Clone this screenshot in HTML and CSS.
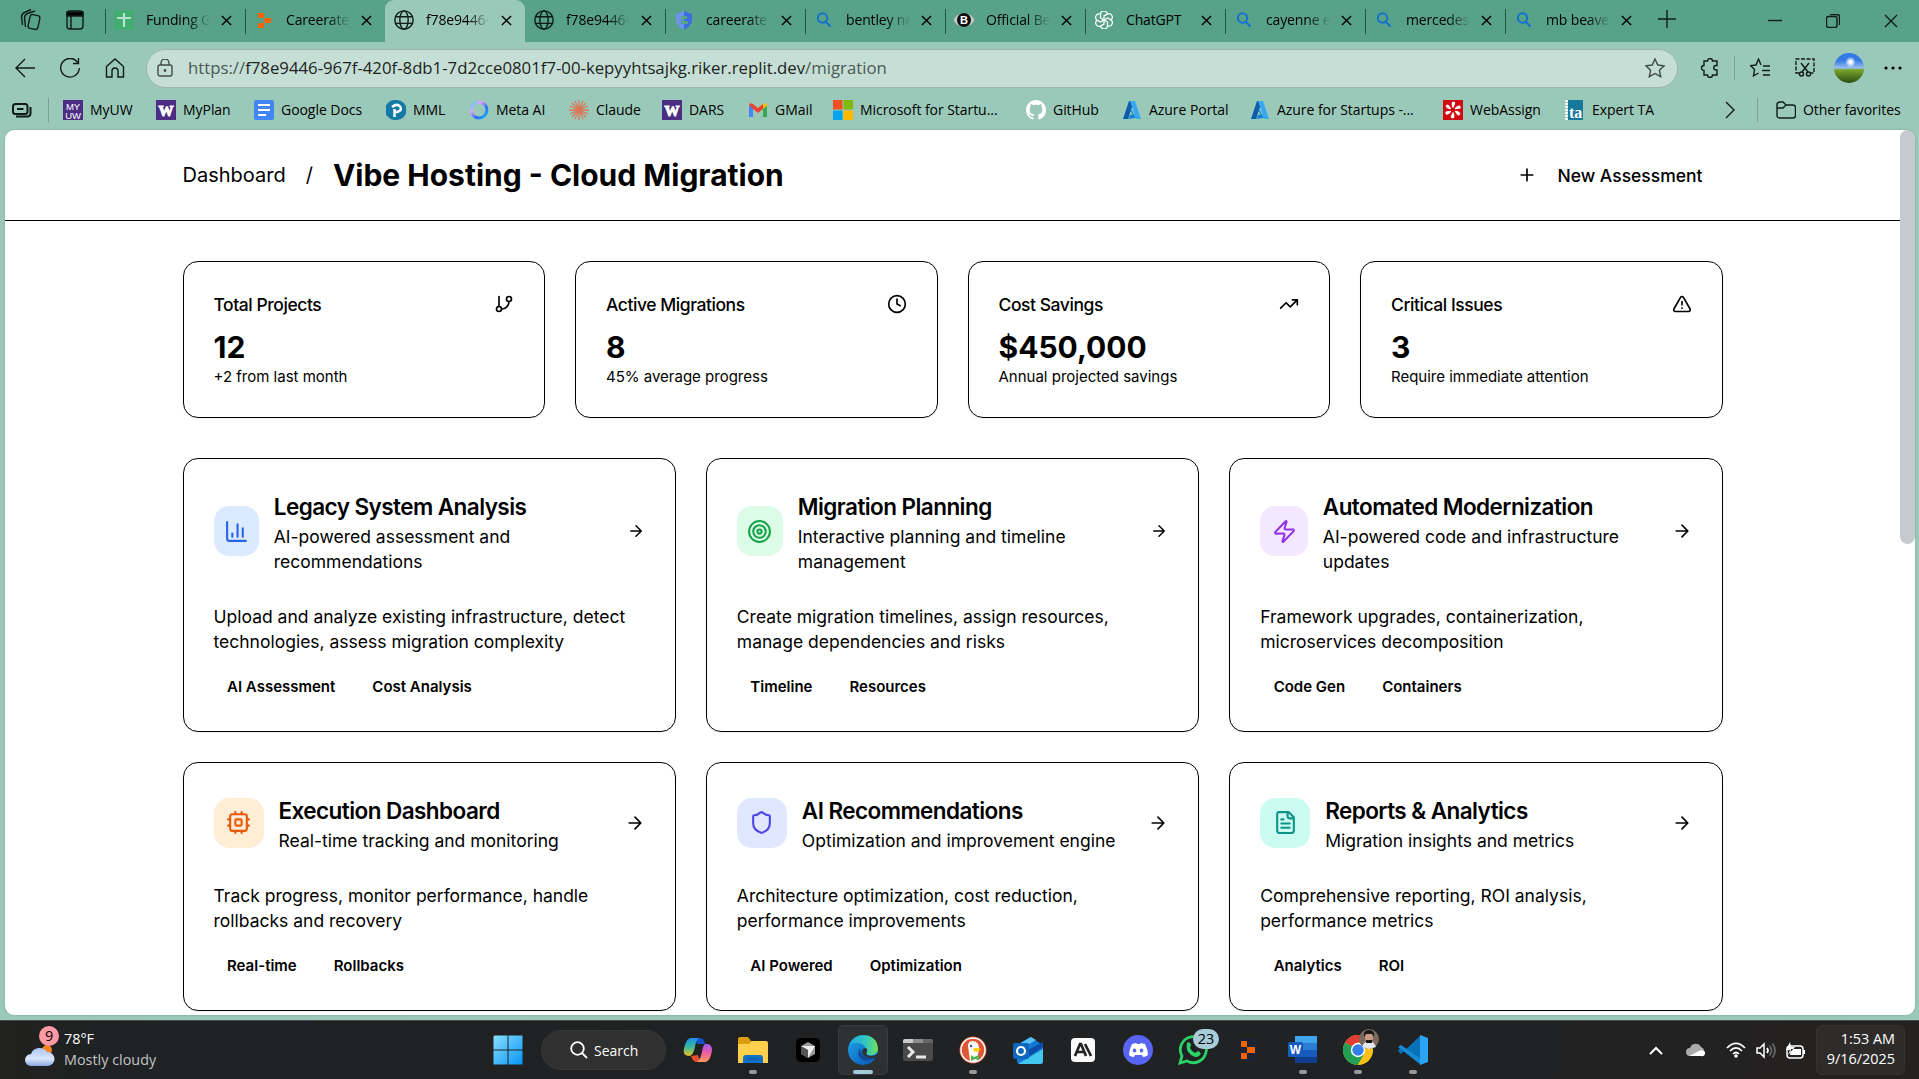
FILE: index.html
```html
<!DOCTYPE html>
<html lang="en">
<head>
<meta charset="utf-8">
<title>Vibe Hosting - Cloud Migration</title>
<link rel="stylesheet" href="styles.css">
</head>
<body>
<svg class="defs" aria-hidden="true">
  <symbol id="close" viewBox="0 0 12 12"><path d="M1 1l10 10M11 1L1 11"/></symbol>
  <symbol id="globe" viewBox="0 0 24 24"><circle cx="12" cy="12" r="11"/><ellipse cx="12" cy="12" rx="5" ry="11"/><path d="M2 8h20M2 16h20"/></symbol>
  <symbol id="find" viewBox="0 0 20 20"><circle cx="8.500" cy="8" r="4.700"/><path d="M12 12l4.500 4.500"/></symbol>
  <symbol id="arrow" viewBox="0 0 24 24"><path d="M5 12h14M12 5l7 7-7 7"/></symbol>
  <symbol id="azure" viewBox="0 0 20 20"><path fill="#0b5cab" d="M7 1h5L6 19H1z"/><path fill="#1686d9" d="M9 9l5 9-8 1 2-4 3-1-3-3z"/><path fill="#38a9ee" d="M8 1h5l6 18h-5z"/></symbol>
</svg>

<header class="browser">
  <div class="tabstrip">
    <div class="tabtools">
      <svg class="ln" width="22" height="24" viewBox="0 0 22 24"><rect x="9" y="7" width="10" height="14" rx="2.500" transform="rotate(12 14 14)"/><path d="M5.500 19l-1-9q0-3 3-4.500L15 3M2.500 17l-1-8q0-3 3-4.500L11 1.500"/></svg>
      <svg class="ln" width="18" height="22" viewBox="0 0 18 22"><rect x="1" y="2" width="16" height="18" rx="3"/><path fill="#000" d="M1 3h16v4H1z"/><path d="M5 7v13"/></svg>
    </div>
    <div class="tab"><svg class="fav" viewBox="0 0 20 20"><rect width="20" height="20" rx="2" fill="#42ad73"/><path d="M10 3v14M3 8h14" stroke="#b9e4ca" stroke-width="2.200"/></svg><span>Funding G</span><svg class="x"><use href="#close"/></svg></div>
    <div class="tab"><svg class="fav" viewBox="0 0 20 20" fill="#ff6205"><rect x="4" y="3" width="6" height="5" rx="1"/><rect x="10" y="8" width="7" height="5" rx="1"/><rect x="4" y="13" width="6" height="5" rx="1"/></svg><span>Careerate</span><svg class="x"><use href="#close"/></svg></div>
    <div class="tab active"><svg class="fav ln"><use href="#globe"/></svg><span>f78e9446-</span><svg class="x"><use href="#close"/></svg></div>
    <div class="tab after"><svg class="fav ln"><use href="#globe"/></svg><span>f78e9446-</span><svg class="x"><use href="#close"/></svg></div>
    <div class="tab"><svg class="fav" viewBox="0 0 20 20"><path fill="#3d6ee0" d="M10 1l8 3v5c0 5-3 8-8 11z"/><path fill="#6d93ea" d="M10 1L2 4v5c0 5 3 8 8 11z"/><path fill="#57a288" d="M7 6h6v3H9v2h5v3H7z"/></svg><span>careerate</span><svg class="x"><use href="#close"/></svg></div>
    <div class="tab"><svg class="fav blue"><use href="#find"/></svg><span>bentley ne</span><svg class="x"><use href="#close"/></svg></div>
    <div class="tab"><svg class="fav" viewBox="0 0 20 20"><ellipse cx="10" cy="10" rx="10" ry="6.500" fill="#c4c9c8"/><circle cx="10" cy="10" r="7" fill="#111"/><text x="10" y="14" class="bfav">B</text></svg><span>Official Be</span><svg class="x"><use href="#close"/></svg></div>
    <div class="tab"><svg class="fav knot" viewBox="0 0 20 20"><path id="k" d="M10 10V5.500l4-2.300a3.800 3.800 0 0 1 4 6.300"/><use href="#k" transform="rotate(60 10 10)"/><use href="#k" transform="rotate(120 10 10)"/><use href="#k" transform="rotate(180 10 10)"/><use href="#k" transform="rotate(240 10 10)"/><use href="#k" transform="rotate(300 10 10)"/></svg><span>ChatGPT</span><svg class="x"><use href="#close"/></svg></div>
    <div class="tab"><svg class="fav blue"><use href="#find"/></svg><span>cayenne e</span><svg class="x"><use href="#close"/></svg></div>
    <div class="tab"><svg class="fav blue"><use href="#find"/></svg><span>mercedes</span><svg class="x"><use href="#close"/></svg></div>
    <div class="tab"><svg class="fav blue"><use href="#find"/></svg><span>mb beave</span><svg class="x"><use href="#close"/></svg></div>
    <div class="newtab"><svg class="ln" width="18" height="18" viewBox="0 0 18 18"><path d="M9 0v18M0 9h18"/></svg></div>
    <div class="wincontrols">
      <svg class="ln" width="14" height="14"><path d="M0 6.500h14"/></svg>
      <svg class="ln" width="14" height="14"><rect x=".5" y="2.500" width="10.500" height="11" rx="2"/><path d="M4 .5h7q2.500 0 2.500 2.500v8"/></svg>
      <svg class="ln" width="14" height="14"><path d="M1 1l12 12M13 1L1 13"/></svg>
    </div>
  </div>

  <div class="toolbar">
    <svg class="ln" width="20" height="20" viewBox="0 0 20 20"><path d="M20 10H1M10 1l-9 9 9 9"/></svg>
    <svg class="ln" width="20" height="20" viewBox="0 0 20 20"><path d="M18 5A9.300 9.300 0 1 0 19.300 10M18.500 0v5.500H13"/></svg>
    <svg class="ln" width="20" height="20" viewBox="0 0 20 20"><path d="M1.500 8.500L10 1l8.500 7.500V19h-5.500v-6a3 3 0 0 0-6 0v6H1.500z"/></svg>
    <div class="address">
      <svg class="ln dim" width="16" height="18" viewBox="0 0 16 18"><rect x="1" y="6" width="14" height="11" rx="2"/><path d="M4 6V4a4 4 0 0 1 8 0v2"/><circle cx="8" cy="11.500" r=".7" fill="#333"/></svg>
      <span class="url"><i>https://</i>f78e9446-967f-420f-8db1-7d2cce0801f7-00-kepyyhtsajkg.riker.replit.dev<i>/migration</i></span>
      <svg class="ln dim star" width="20" height="20" viewBox="0 0 20 20"><path d="M10 1l2.800 6 6.300.8-4.700 4.400 1.300 6.500L10 15.500l-5.700 3.200 1.300-6.500L.9 7.800 7.200 7z"/></svg>
    </div>
    <div class="actions">
      <svg class="ln" width="20" height="20" viewBox="0 0 20 20"><path d="M4 3h3.500a2.500 2.500 0 0 1 5 0H17v4.500h-1a2 2 0 0 0 0 4.500h1v5h-4.500a2.500 2.500 0 0 1-5 0H4v-4.500a2.500 2.500 0 0 1 0-5z"/></svg>
      <b class="rule"></b>
      <svg class="ln" width="20" height="20" viewBox="0 0 20 20"><path d="M11 7L8.500 1 6 7l-5.500.6 4 4L3.500 18l5-3M13 8h7M12 12.500h8M13 17h7"/></svg>
      <svg class="ln" width="20" height="20" viewBox="0 0 20 20"><path stroke-dasharray="4 1.500" d="M4 15H1V1h18v14h-3"/><path d="M6 5l7 9M14 5l-7 9"/><circle cx="6.500" cy="16" r="2"/><circle cx="13.500" cy="16" r="2"/></svg>
      <i class="avatar"></i>
      <svg width="18" height="4" fill="#000"><circle cx="2" cy="2" r="1.600"/><circle cx="9" cy="2" r="1.600"/><circle cx="16" cy="2" r="1.600"/></svg>
    </div>
  </div>

  <nav class="bookmarks">
    <div><svg class="ln bold" viewBox="0 0 20 20"><rect x="1" y="4" width="14.500" height="10" rx="2.500"/><path d="M5 9h6.500M4 16.500h11q3.500 0 3.500-3V7"/></svg></div>
    <b class="rule"></b>
    <div><svg viewBox="0 0 20 20"><rect width="20" height="20" fill="#4b2e83"/><text x="10" y="9.500" class="myuw">MY</text><text x="10" y="18.500" class="myuw">UW</text></svg>MyUW</div>
    <div><svg viewBox="0 0 20 20"><rect width="20" height="20" fill="#4b2e83"/><text x="10" y="15.500" class="uw">W</text></svg>MyPlan</div>
    <div><svg viewBox="0 0 20 20"><rect width="20" height="20" rx="2" fill="#4285f4"/><path d="M4 5h12M4 10h12M4 15h8" stroke="#fff" stroke-width="2"/></svg>Google Docs</div>
    <div><svg viewBox="0 0 20 20"><path fill="#127aa4" d="M10 0a10 10 0 0 1 1 20H8A10 10 0 0 1 10 0"/><path d="M8.500 17V9M6 7q5-4 8-.5T11 12H8.500" fill="none" stroke="#fff" stroke-width="2.500"/></svg>MML</div>
    <div><svg viewBox="0 0 20 20"><defs><linearGradient id="meta" x2="1" y2="1"><stop stop-color="#28d8eb"/><stop offset=".3" stop-color="#e8a2fa"/><stop offset=".65" stop-color="#286cf6"/><stop offset="1" stop-color="#18c4ec"/></linearGradient></defs><circle cx="10" cy="10" r="8" fill="none" stroke="url(#meta)" stroke-width="3"/></svg>Meta AI</div>
    <div><svg viewBox="0 0 20 20"><path d="M10 0v20M0 10h20M3 3l14 14M17 3L3 17M6 1l8 18M14 1L6 19M1 6l18 8M19 6L1 14" stroke="#d97757" stroke-width="1.300"/></svg>Claude</div>
    <div><svg viewBox="0 0 20 20"><rect width="20" height="20" fill="#4b2e83"/><text x="10" y="15.500" class="uw">W</text></svg>DARS</div>
    <div><svg viewBox="0 0 20 20"><path fill="#4285f4" d="M1 5l4 3v9H1z"/><path fill="#34a853" d="M15 8l4-3v12h-4z"/><path fill="#ea4335" d="M1 5q1-3 4-1l5 4 5-4v5l-5 4-5-4z"/><path fill="#fbbc04" d="M15 4q3-2 4 1v1l-4 3z"/></svg>GMail</div>
    <div><svg viewBox="0 0 20 20"><path fill="#f25022" d="M0 0h9.500v9.500H0z"/><path fill="#7fba00" d="M10.500 0H20v9.500h-9.500z"/><path fill="#00a4ef" d="M0 10.500h9.500V20H0z"/><path fill="#ffb900" d="M10.500 10.500H20V20h-9.500z"/></svg>Microsoft for Startu...</div>
    <div><svg viewBox="0 0 16 16"><path fill="#fff" d="M8 0C3.580 0 0 3.580 0 8c0 3.540 2.290 6.530 5.470 7.590.4.070.55-.17.55-.38 0-.19-.01-.82-.01-1.490-2.010.37-2.530-.49-2.690-.94-.09-.23-.48-.94-.82-1.130-.28-.15-.68-.52-.01-.53.63-.01 1.080.58 1.230.82.72 1.210 1.870.87 2.330.66.070-.52.28-.87.510-1.070-1.780-.2-3.640-.89-3.640-3.950 0-.87.310-1.590.82-2.150-.08-.2-.36-1.020.08-2.120 0 0 .67-.21 2.200.82.640-.18 1.320-.27 2-.27s1.360.09 2 .27c1.530-1.040 2.200-.82 2.200-.82.44 1.100.16 1.920.08 2.120.51.560.82 1.270.82 2.150 0 3.070-1.870 3.750-3.650 3.950.29.25.54.73.54 1.480 0 1.070-.01 1.930-.01 2.200 0 .21.15.46.55.38A8 8 0 0 0 16 8c0-4.420-3.580-8-8-8"/></svg>GitHub</div>
    <div><svg><use href="#azure"/></svg>Azure Portal</div>
    <div><svg><use href="#azure"/></svg>Azure for Startups -...</div>
    <div><svg viewBox="0 0 20 20"><rect width="20" height="20" fill="#d10a11"/><g fill="#fff"><path id="pt" d="M9 2q4-1 3 2t-2 4q-2-2-1-6"/><use href="#pt" transform="rotate(60 10 10)"/><use href="#pt" transform="rotate(120 10 10)"/><use href="#pt" transform="rotate(180 10 10)"/><use href="#pt" transform="rotate(240 10 10)"/><use href="#pt" transform="rotate(300 10 10)"/></g></svg>WebAssign</div>
    <div><svg viewBox="0 0 20 20"><path fill="#16789b" d="M3 0h15v20H3z"/><path d="M1.500 0v20" stroke="#fff" stroke-width="2.500" stroke-dasharray="2 1"/><text x="10.500" y="17.500" class="ta">ta</text></svg>Expert TA</div>
    <div><svg class="ln" viewBox="0 0 20 20"><path d="M6 2l8 8-8 8"/></svg></div>
    <b class="rule"></b>
    <div><svg class="ln" viewBox="0 0 20 20"><path d="M1 5q0-3 3-3h3l3 3-3 3H1zM10 5h7q2.500 0 2.500 2.500v8q0 2.500-2.500 2.500H3.500Q1 18 1 15.500V7"/></svg>Other favorites</div>
  </nav>
</header>

<div class="viewport">
  <div class="page">
    <header class="pagehead">
      <div class="crumbs"><span>Dashboard</span><span>/</span><h1>Vibe Hosting - Cloud Migration</h1></div>
      <button class="new"><svg class="ic" viewBox="0 0 24 24"><path d="M5 12h14M12 5v14"/></svg>New Assessment</button>
    </header>
    <main>
      <section class="stats">
        <article class="card"><header><h3>Total Projects</h3><svg class="ic" viewBox="0 0 24 24"><path d="M6 3v12M18 9a9 9 0 0 1-9 9"/><circle cx="18" cy="6" r="3"/><circle cx="6" cy="18" r="3"/></svg></header><strong>12</strong><p>+2 from last month</p></article>
        <article class="card"><header><h3>Active Migrations</h3><svg class="ic" viewBox="0 0 24 24"><circle cx="12" cy="12" r="10"/><path d="M12 6v6l4 2"/></svg></header><strong>8</strong><p>45% average progress</p></article>
        <article class="card"><header><h3>Cost Savings</h3><svg class="ic" viewBox="0 0 24 24"><path d="M22 7l-8.500 8.500-5-5L2 17M16 7h6v6"/></svg></header><strong>$450,000</strong><p>Annual projected savings</p></article>
        <article class="card"><header><h3>Critical Issues</h3><svg class="ic" viewBox="0 0 24 24"><path d="m21.730 18-8-14a2 2 0 0 0-3.480 0l-8 14A2 2 0 0 0 4 21h16a2 2 0 0 0 1.730-3M12 9v4M12 17h.01"/></svg></header><strong>3</strong><p>Require immediate attention</p></article>
      </section>
      <section class="features">
        <article class="card">
          <header><i class="tile t1"><svg viewBox="0 0 24 24"><path d="M3 3v16a2 2 0 0 0 2 2h16M18 17V9M13 17V5M8 17v-3"/></svg></i><div><h2>Legacy System Analysis</h2><p>AI-powered assessment and<br>recommendations</p></div><svg class="ic go sm"><use href="#arrow"/></svg></header>
          <p>Upload and analyze existing infrastructure, detect<br>technologies, assess migration complexity</p>
          <footer><span>AI Assessment</span><span>Cost Analysis</span></footer>
        </article>
        <article class="card">
          <header><i class="tile t2"><svg viewBox="0 0 24 24"><circle cx="12" cy="12" r="10"/><circle cx="12" cy="12" r="6"/><circle cx="12" cy="12" r="2"/></svg></i><div><h2>Migration Planning</h2><p>Interactive planning and timeline<br>management</p></div><svg class="ic go sm"><use href="#arrow"/></svg></header>
          <p>Create migration timelines, assign resources,<br>manage dependencies and risks</p>
          <footer><span>Timeline</span><span>Resources</span></footer>
        </article>
        <article class="card">
          <header><i class="tile t3"><svg viewBox="0 0 24 24"><path d="M4 14a1 1 0 0 1-.78-1.630l9.900-10.200a.5.5 0 0 1 .86.46l-1.920 6.020A1 1 0 0 0 13 10h7a1 1 0 0 1 .78 1.630l-9.900 10.200a.5.5 0 0 1-.86-.46l1.920-6.020A1 1 0 0 0 11 14z"/></svg></i><div><h2>Automated Modernization</h2><p>AI-powered code and infrastructure<br>updates</p></div><svg class="ic go"><use href="#arrow"/></svg></header>
          <p>Framework upgrades, containerization,<br>microservices decomposition</p>
          <footer><span>Code Gen</span><span>Containers</span></footer>
        </article>
        <article class="card">
          <header><i class="tile t4"><svg viewBox="0 0 24 24"><rect x="4" y="4" width="16" height="16" rx="2"/><rect x="9" y="9" width="6" height="6" rx="1"/><path d="M15 2v2M15 20v2M2 15h2M2 9h2M20 15h2M20 9h2M9 2v2M9 20v2"/></svg></i><div><h2>Execution Dashboard</h2><p>Real-time tracking and monitoring</p></div><svg class="ic go"><use href="#arrow"/></svg></header>
          <p>Track progress, monitor performance, handle<br>rollbacks and recovery</p>
          <footer><span>Real-time</span><span>Rollbacks</span></footer>
        </article>
        <article class="card">
          <header><i class="tile t5"><svg viewBox="0 0 24 24"><path d="M20 13c0 5-3.500 7.500-7.660 8.950a1 1 0 0 1-.67-.01C7.500 20.500 4 18 4 13V6a1 1 0 0 1 1-1c2 0 4.500-1.200 6.240-2.720a1.170 1.170 0 0 1 1.520 0C14.510 3.810 17 5 19 5a1 1 0 0 1 1 1z"/></svg></i><div><h2>AI Recommendations</h2><p>Optimization and improvement engine</p></div><svg class="ic go"><use href="#arrow"/></svg></header>
          <p>Architecture optimization, cost reduction,<br>performance improvements</p>
          <footer><span>AI Powered</span><span>Optimization</span></footer>
        </article>
        <article class="card">
          <header><i class="tile t6"><svg viewBox="0 0 24 24"><path d="M15 2H6a2 2 0 0 0-2 2v16a2 2 0 0 0 2 2h12a2 2 0 0 0 2-2V7zM14 2v4a2 2 0 0 0 2 2h4M10 9H8M16 13H8M16 17H8"/></svg></i><div><h2>Reports &amp; Analytics</h2><p>Migration insights and metrics</p></div><svg class="ic go"><use href="#arrow"/></svg></header>
          <p>Comprehensive reporting, ROI analysis,<br>performance metrics</p>
          <footer><span>Analytics</span><span>ROI</span></footer>
        </article>
      </section>
    </main>
  </div>
  <div class="scrollbar"><i></i></div>
</div>

<footer class="taskbar">
  <div class="weather">
    <div class="cloud"><svg width="32" height="26" viewBox="0 0 32 26"><defs><linearGradient id="cl" x2="0" y2="1"><stop stop-color="#a9c6f6"/><stop offset=".6" stop-color="#dbe6fb"/><stop offset="1" stop-color="#87a7e2"/></linearGradient></defs><circle cx="22" cy="7" r="5" fill="#f58220"/><path fill="url(#cl)" d="M6 23a6 6 0 0 1 0-12 9 9 0 0 1 16-2 7 7 0 0 1 1 14z"/></svg><b>9</b></div>
    <div><div>78°F</div><div class="muted">Mostly cloudy</div></div>
  </div>
  <div class="apps">
    <div class="app"><svg viewBox="0 0 30 30"><defs><linearGradient id="w" x2="1" y2="1"><stop stop-color="#8ae0ff"/><stop offset="1" stop-color="#0694f8"/></linearGradient></defs><path fill="url(#w)" d="M1.500.5H14.500v14H.5V1.500zM15.500.5H29.500v14h-14zM.5 15.500h14v14H.5zM15.500 15.500h14v14h-14z"/></svg></div>
    <div class="search"><svg width="18" height="18" viewBox="0 0 18 18"><circle cx="7.500" cy="7.500" r="6.300"/><path d="M12 12l5 5"/></svg>Search</div>
    <div class="app"><svg viewBox="0 0 30 30"><defs><linearGradient id="ca" x2="0" y2="1"><stop stop-color="#1d8ded"/><stop offset=".5" stop-color="#3bb99d"/><stop offset="1" stop-color="#e6c51f"/></linearGradient><linearGradient id="cb" x2="0" y2="1"><stop stop-color="#a05cf0"/><stop offset=".5" stop-color="#ee5aa5"/><stop offset="1" stop-color="#fd9b55"/></linearGradient></defs><path fill="#1650c8" d="M8 3h9q4 0 5 6h-7z"/><path fill="#e9502b" d="M8 21l7-1 2 7h-3q-4 0-6-6"/><path fill="url(#ca)" d="M8 3h8q-3 2-4 9-2 9-6 9-8 0-4-11 2-7 6-7"/><path fill="url(#cb)" d="M22 9h3q6 2 3 11-2 7-6 7h-8q3-2 5-10 1-7 3-8"/></svg></div>
    <div class="app run"><svg viewBox="0 0 30 30"><path fill="#dc9c10" d="M0 4q0-2 2-2h8l3 4h15v8H0z"/><path fill="#ffd04b" d="M0 9h11l3-3h14q2 0 2 2v20H0z"/><path fill="#0f72c6" d="M5 28v-5q0-3 3-3h14q3 0 3 3v5z"/><path d="M9 24h12" stroke="#0a4c91"/></svg></div>
    <div class="app"><svg viewBox="0 0 30 30"><rect x="3" y="3" width="24" height="24" rx="5" fill="#000"/><path fill="#999" d="M15 7l7 4v8l-7 4-7-4v-8z"/><path fill="#eee" d="M8 11h14l-7 12v-8z"/><path fill="#555" d="M8 11l7 4v8l-7-4z"/></svg></div>
    <div class="app current"><svg viewBox="0 0 30 30"><defs><linearGradient id="e1" x2="1"><stop stop-color="#22a8e5"/><stop offset=".6" stop-color="#34c8bd"/><stop offset="1" stop-color="#70e052"/></linearGradient><linearGradient id="e2" x2="1" y2="1"><stop stop-color="#1fa5e8"/><stop offset="1" stop-color="#0654b5"/></linearGradient></defs><circle cx="15" cy="15" r="15" fill="url(#e2)"/><path fill="url(#e1)" d="M1 10C7-4 30-3 30 14c0 6-8 8-12 5-2-2 1-2 0-5-2-7-12-8-17-4"/><path fill="#124c98" d="M12 13c-5 8 2 15 10 12 3-1 6-3 5-4-7 3-15 0-15-8"/><path fill="#2e3031" d="M18 13c3 3-1 5 1 7 3 2 8 1 11-1l-2 4c-5 1-13-1-14-6q0-4 4-4"/></svg></div>
    <div class="app"><svg viewBox="0 0 30 30"><rect y="4" width="30" height="22" rx="2" fill="#4a4a4a"/><path fill="#ccc" d="M0 8V6q0-2 2-2h8v4z"/><path fill="#8c8c8c" d="M10 4h10v4H10z"/><path fill="#666" d="M20 4h8q2 0 2 2v2H20z"/><path d="M5 12l5 5-5 5M13 22h10" fill="none" stroke="#e8e8e8" stroke-width="3"/></svg></div>
    <div class="app run"><svg viewBox="0 0 30 30"><circle cx="15" cy="15" r="13.500" fill="#de5833"/><circle cx="15" cy="15" r="12" fill="none" stroke="#fff" stroke-width="1.500"/><path fill="#fff" d="M12 26L10 11q0-5 5-5 6 1 6 7l-2 13q-4 2-7 0"/><path fill="#fdd20a" d="M15 14q3-2 8 0l-4 3q-4 0-4-3"/><circle cx="13" cy="11" r="1.200" fill="#2d4f8e"/><path fill="#50b850" d="M13 20l3 2 5-2v5l-4-1-4 2z"/></svg></div>
    <div class="app"><svg viewBox="0 0 30 30"><path fill="#1478d4" d="M4 10L17 2l13 8v17q0 2-2 2H7q-3 0-3-3z"/><path fill="#5bc0f5" d="M6 9l12-7 5 3-15 9z"/><path fill="#0c4da8" d="M9 18l21-11v5L12 24z"/><path fill="#42c8ee" d="M5 29l25-15v12q0 3-3 3z"/><rect y="8" width="16" height="16" rx="2" fill="#0f66bd"/><circle cx="8" cy="16" r="4" fill="none" stroke="#fff" stroke-width="2.200"/></svg></div>
    <div class="app"><svg viewBox="0 0 30 30"><rect x="3" y="3" width="24" height="24" rx="4" fill="#fafafa"/><path d="M7 21l5-12h1l5 12M9 17h7M17 9l6 12" fill="none" stroke="#222" stroke-width="2.700"/></svg></div>
    <div class="app"><svg viewBox="0 0 30 30"><circle cx="15" cy="15" r="15" fill="#5865f2"/><path fill="#fff" d="M9 9l4-1 1 1h3l1-1 4 1q3 6 3 11-2 2-5 2l-1-2h-7l-1 2q-3 0-5-2 0-5 3-11"/><ellipse cx="11.500" cy="15.500" rx="1.800" ry="2" fill="#5865f2"/><ellipse cx="18.500" cy="15.500" rx="1.800" ry="2" fill="#5865f2"/></svg></div>
    <div class="app"><svg viewBox="0 0 30 30"><path d="M2 28l2-7a13 13 0 1 1 5 5z" fill="none" stroke="#2bd366" stroke-width="2.800"/><path fill="#2bd366" d="M9 8q3-2 4 2l-1 3q2 4 5 5l3-2q4 2 2 4-3 4-9 0Q7 15 9 8"/></svg><b class="count">23</b></div>
    <div class="app"><svg viewBox="0 0 30 30"><rect x="5" y="4" width="20" height="22" rx="2" fill="#1c2333"/><path fill="#f26207" d="M8 6h6v6H8zM14 12h8v6h-8zM8 18h6v6H8z"/></svg></div>
    <div class="app run"><svg viewBox="0 0 30 30"><path fill="#41a5ee" d="M7 1h22v7H7z"/><path fill="#2b7cd3" d="M7 8h22v7H7z"/><path fill="#185abd" d="M7 15h22v7H7z"/><path fill="#103f91" d="M7 22h22v6H7z"/><rect y="7" width="15" height="15" rx="1.500" fill="#185abd"/><text x="7.500" y="18.500" class="word">W</text></svg></div>
    <div class="app run"><svg viewBox="0 0 30 30"><circle cx="15" cy="15" r="15" fill="#fbc116"/><path fill="#df3d31" d="M15 15L2 7.500A15 15 0 0 1 28 7.500H15z"/><path fill="#229f52" d="M15 15L2 7.500A15 15 0 0 0 15 30l6-11z"/><path fill="#fbc116" d="M15 30l7-12V8h6a15 15 0 0 1-13 22"/><circle cx="15" cy="15" r="7.200" fill="#fff"/><circle cx="15" cy="15" r="5.700" fill="#347eec"/></svg><svg class="face" viewBox="0 0 20 20"><circle cx="10" cy="10" r="10" fill="#796a60"/><path fill="#e2e5ed" d="M3 18q2-6 7-6t7 6l-7 2z"/><ellipse cx="10" cy="8.500" rx="4" ry="5.500" fill="#c79a82"/><path fill="#1d1714" d="M5 8q-1-7 5-7t5 7l-2-3H7zM7 11h6v3H7z"/></svg></div>
    <div class="app run"><svg viewBox="0 0 30 30"><path fill="#0872b9" d="M22 1L3 19l-3-3 2-3 20 16z"/><path fill="#168bd2" d="M0 12l3-2 19 13v6z"/><path fill="#2aa4f3" d="M22 0l8 3v24l-8 3z"/></svg></div>
  </div>
  <div class="tray">
    <svg width="14" height="9"><path d="M1 8l6-6 6 6" stroke-width="2"/></svg>
    <svg width="20" height="14"><path d="M4 13a4 4 0 0 1 0-8 6 6 0 0 1 11-1 5 5 0 0 1 1 9z" fill="#aaa" stroke="none"/><path d="M3 13L15 7q5 1 4 4t-4 2z" fill="#fff" stroke="none"/></svg>
    <svg width="20" height="16"><path d="M1 6q9-9 18 0M4 9q6-6 12 0M7 12q3-3 6 0" stroke-width="1.700"/><circle cx="10" cy="14" r="1.800" fill="#fff" stroke="none"/></svg>
    <svg width="20" height="17"><path d="M1 6h3l4-4v13l-4-4H1z" stroke-width="1.500"/><path d="M11 6q2 2.500 0 5"/><path d="M13.500 3.500q4 5 0 10M16.500 1.500q5 7 0 14" stroke="#666"/></svg>
    <svg width="20" height="17"><rect x="1" y="4" width="16" height="12" rx="3" stroke-width="1.500"/><path d="M5 7h10v6H4zM17 8h2v4h-2zM4 0L0 8h4l-2 5 7-8H5z" fill="#fff" stroke="none"/></svg>
    <div class="clock"><div>1:53 AM</div><div>9/16/2025</div></div>
  </div>
</footer>
</body>
</html>
```
FILE: styles.css
```css
* { box-sizing: border-box; }
body { margin: 0; width: 1919px; height: 1079px; overflow: hidden; display: flex; flex-direction: column; background: #9bc9b9; color: #000; font-family: "Open Sans", sans-serif; }
h1, h2, h3, p { margin: 0; }
i { font-style: normal; }
svg { display: block; flex: none; }
.defs { position: absolute; width: 0; height: 0; }
.ln { fill: none; stroke: #101c18; stroke-width: 1.4; }
.ln.bold { stroke-width: 2; }
.ln.dim { stroke: #3f4c47; }
.rule { width: 1px; height: 24px; background: #7aa193; }

/* Browser chrome */
.browser { height: 130px; flex: none; display: flex; flex-direction: column; }
.tabstrip { height: 42px; background: #57a288; display: flex; align-items: stretch; font-size: 14px; letter-spacing: -.15px; }
.tabtools { width: 105px; display: flex; gap: 24px; align-items: center; padding: 0 0 2px 20px; }
.tab { width: 140px; display: flex; align-items: center; padding: 0 12px 2px 9px; position: relative; }
.tab::before { content: ""; position: absolute; left: 0; top: 9px; width: 1px; height: 25px; background: #245747; }
.tab.active { background: #9bc9b9; border-radius: 9px 9px 0 0; }
.tab.active::before, .tab.after::before { display: none; }
.fav { width: 20px; height: 20px; margin-right: 12px; }
.fav.ln { stroke-width: 1.7; }
.knot { fill: none; stroke: #fff; stroke-width: 1.4; padding: 1px; }
.blue { fill: none; stroke: #1272cd; stroke-width: 2; }
.tab span { width: 66px; overflow: hidden; white-space: nowrap; margin-top: -2px; -webkit-mask-image: linear-gradient(90deg, #000 62%, transparent 98%); }
.tab:has(.knot) span { -webkit-mask-image: none; }
.tab .x { width: 11px; height: 11px; margin-left: auto; margin-right: 1px; fill: none; stroke: #000; stroke-width: 1.5; overflow: visible; }
.newtab { width: 42px; display: flex; align-items: center; padding: 0 0 4px 13px; }
.wincontrols { flex: 1; display: flex; justify-content: flex-end; gap: 44px; align-items: center; padding-right: 21px; }
.bfav { font: bold 11px "Liberation Sans", sans-serif; fill: #fff; text-anchor: middle; }
.toolbar { height: 52px; display: flex; align-items: center; padding: 0 15px; }
.toolbar > svg { margin-right: 25px; }
.address { width: 1532px; height: 39px; border: 1px solid #9fb5ac; border-radius: 20px; background: #c5dfd6; display: flex; align-items: center; padding: 0 12px 0 10px; margin-left: -4px; }
.url { margin: -2px 0 0 15px; font-size: 16.75px; color: #1d2320; white-space: nowrap; }
.url i { color: #4c5954; }
.star { margin-left: auto; }
.actions { flex: 1; display: flex; align-items: center; padding-left: 22px; }
.actions .rule { margin: 0 15px 0 14px; }
.actions .rule + svg { margin-right: 25px; }
.avatar { width: 30px; height: 30px; border-radius: 50%; margin: 0 20px 0 19px; background: radial-gradient(circle at 55% 30%, #fff 0 5%, transparent 20%), linear-gradient(#3579e4 0 25%, #9ac0f2 50%, #79a52b 56%, #294e12); }
.bookmarks { flex: 1; display: grid; grid-template-columns: 36px 15px 93px 98px 132px 83px 100px 93px 86px 85px 193px 96px 128px 193px 122px 155px 37px 19px 150px; align-items: center; padding: 0 0 5px 12px; font-size: 14px; letter-spacing: -.05px; white-space: nowrap; }
.bookmarks div { display: flex; align-items: center; gap: 7px; }
.bookmarks svg { width: 20px; height: 20px; }
.myuw { font: 9.5px "Liberation Sans", sans-serif; fill: #fff; text-anchor: middle; }
.uw { font: bold 15px "Liberation Serif", serif; fill: #fff; stroke: #fff; text-anchor: middle; }
.ta { font: bold 16px "Liberation Serif", serif; fill: #fff; text-anchor: middle; }

/* Web page */
.viewport { width: 1910px; height: 885px; flex: none; margin-left: 5px; background: #fff; border-radius: 9px; overflow: hidden; display: flex; box-shadow: 0 0 2px #6d9d8c; }
.page { width: 1895px; font-family: Inter, sans-serif; }
.scrollbar { width: 15px; }
.scrollbar i { display: block; height: 414px; background: #c6cace; border-radius: 8px; }
.pagehead { height: 91px; border-bottom: 1px solid #000; display: flex; justify-content: space-between; align-items: center; padding: 0 177.5px; }
.crumbs { display: flex; align-items: center; gap: 20px; font-size: 20px; }
h1 { font-size: 30px; line-height: 40px; font-weight: 700; }
.new { display: flex; align-items: center; gap: 20px; padding: 0 20px; border: 0; background: none; color: #000; font: 500 17.5px/25px Inter, sans-serif; }
.ic { width: 20px; height: 20px; fill: none; stroke: #000; stroke-width: 2; stroke-linecap: round; stroke-linejoin: round; }
main { padding: 39.8px 177.5px 0; }
.card { border: 1px solid #000; border-radius: 15px; padding: 30px; box-shadow: 0 1px 2px #0001; }
.stats { display: grid; grid-template-columns: repeat(4, 1fr); gap: 30px; }
.stats header { display: flex; align-items: center; justify-content: space-between; margin-bottom: 10px; }
h3 { font-size: 17.5px; line-height: 25px; font-weight: 500; letter-spacing: -.44px; }
.stats strong { display: block; font-size: 30px; line-height: 40px; font-weight: 700; }
.stats p { font-size: 15px; line-height: 20px; }
.features { display: grid; grid-template-columns: repeat(3, 1fr); gap: 30px; margin-top: 40px; }
.features header { display: flex; align-items: center; margin-bottom: 30px; }
.features p { font-size: 17.5px; line-height: 25px; white-space: nowrap; }
h2 { font-size: 22.5px; line-height: 35px; font-weight: 600; letter-spacing: -.56px; white-space: nowrap; }
.go { margin-left: auto; }
.go.sm { width: 18px; }
.tile { width: 50px; height: 50px; border-radius: 15px; display: flex; align-items: center; justify-content: center; margin-right: 15px; flex: none; }
.tile svg { width: 25px; height: 25px; fill: none; stroke: currentColor; stroke-width: 2; stroke-linecap: round; stroke-linejoin: round; }
.t1 { width: 45.3px; background: #dbeafe; color: #2563eb; }
.t2 { width: 46px; background: #dcfce7; color: #16a34a; }
.t3 { width: 47.7px; background: #f3e8ff; color: #9333ea; }
.t4 { background: #ffedd5; color: #ea580c; }
.t5 { background: #e0e7ff; color: #4f46e5; }
.t6 { background: #ccfbf1; color: #0d9488; }
.features footer { display: flex; gap: 10px; margin-top: 20px; }
.features footer span { padding: 2.5px 12.5px; border: 1px solid transparent; font-size: 15px; line-height: 20px; font-weight: 600; }

/* Windows taskbar */
.taskbar { margin-top: 5px; height: 59px; flex: none; background: linear-gradient(90deg, #21211e, #1d2328 11%, #202122 22%, #202224 75%, #24211f); border-top: 1px solid #444b49; color: #fff; display: flex; align-items: center; font-size: 14.4px; }
.weather { width: 483px; display: flex; gap: 7px; padding: 0 0 2px 25px; line-height: 21px; }
.muted { color: #c2c3c3; }
.cloud { position: relative; padding-top: 15px; }
.cloud b { position: absolute; left: 14px; top: -2px; width: 20px; height: 20px; border-radius: 50%; background: #ff99a4; color: #000; font-weight: 400; line-height: 20px; text-align: center; }
.apps { display: flex; gap: 5px; }
.app { position: relative; width: 50px; height: 50px; display: flex; align-items: center; justify-content: center; border-radius: 5px; }
.app > svg { width: 30px; height: 30px; }
.app.current { background: #2e3031; border: 1px solid #393b3b; }
.run::after, .current::after { content: ""; position: absolute; bottom: 1px; width: 8px; height: 4px; border-radius: 2px; background: #999; }
.current::after { width: 20px; bottom: 0; background: #a4cbdc; }
.search { width: 125px; height: 40px; margin: 5px 2px 5px 3px; border-radius: 20px; background: #303030; border: 1px solid #363737; display: flex; align-items: center; gap: 6px; padding-left: 28px; font-size: 14px; }
.search svg, .tray svg { fill: none; stroke: #fff; stroke-width: 1.8; }
.count { position: absolute; left: 25px; top: 4px; width: 26px; height: 20px; border-radius: 11px; background: #a7cbd9; color: #000; font-weight: 400; line-height: 19px; text-align: center; }
.app > .face { position: absolute; left: 26px; top: 4px; width: 20px; height: 20px; }
.word { font: bold 12px "Liberation Sans", sans-serif; fill: #fff; text-anchor: middle; }
.tray { margin-left: auto; display: flex; align-items: center; padding-right: 14px; }
.tray svg:nth-child(1) { margin-right: 23px; }
.tray svg:nth-child(2) { margin-right: 20px; }
.tray svg:nth-child(3), .tray svg:nth-child(4), .tray svg:nth-child(5) { margin-right: 10px; }
.clock { width: 89px; height: 50px; padding: 3px 9px 0 0; border-radius: 6px; border: 1px solid #343231; background: #2e2c2a; text-align: right; line-height: 20px; }
```
